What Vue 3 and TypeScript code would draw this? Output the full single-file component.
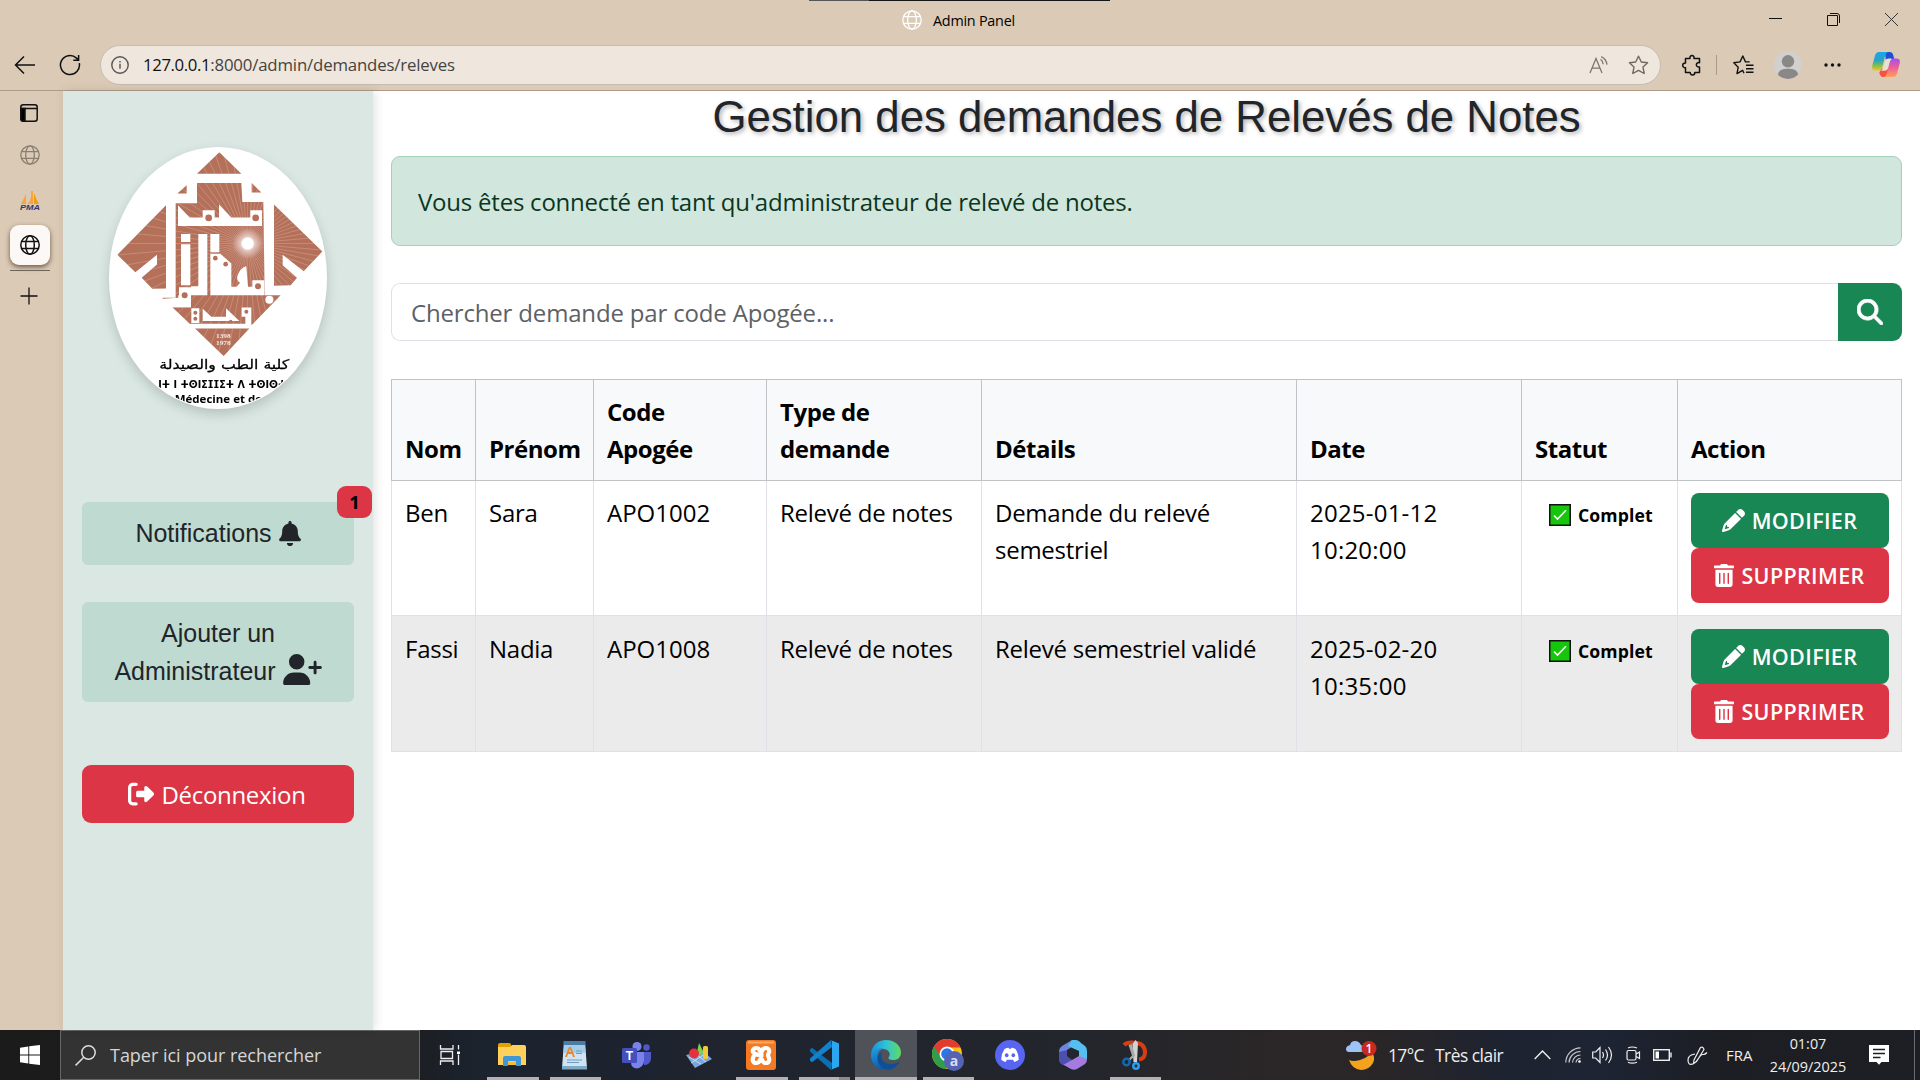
<script setup lang="ts">
interface Demande {
  nom: string
  prenom: string
  code: string
  type: string
  details: string
  date: string
  heure: string
}

const demandes: Demande[] = [
  { nom: 'Ben', prenom: 'Sara', code: 'APO1002', type: 'Relevé de notes', details: 'Demande du relevé semestriel', date: '2025-01-12', heure: '10:20:00' },
  { nom: 'Fassi', prenom: 'Nadia', code: 'APO1008', type: 'Relevé de notes', details: 'Relevé semestriel validé', date: '2025-02-20', heure: '10:35:00' },
]

const colonnes = ['Nom', 'Prénom', 'Code Apogée', 'Type de demande', 'Détails', 'Date', 'Statut', 'Action']

// Sun rays of the emblem, spread from the centre of the sun
const rays = Array.from({ length: 72 }, (_, i) => {
  const a = (i * 5 * Math.PI) / 180
  return { x: 473 + Math.cos(a) * 420, y: 340 + Math.sin(a) * 420 }
})
</script>

<template>
  <div class="screen">
    <header class="browser">
      <div class="titlebar">
        <i class="snapbar"></i>
        <div class="tabtitle">
          <svg width="20" height="20" viewBox="0 0 20 20" fill="none" stroke="#fff" stroke-width="1.3"><circle cx="10" cy="10" r="9.2" /><ellipse cx="10" cy="10" rx="4.3" ry="9.2" /><path d="M1.6 6.6h16.8M1.6 13.4h16.8" /></svg>
          <span>Admin Panel</span>
        </div>
        <svg class="wincontrols" width="160" height="40" viewBox="0 0 160 40" fill="none" stroke="#111" stroke-width="1"><path d="M29 18.5h13" /><path d="M87.5 15.5h10v10h-10zM90 13.5h7q2.5 0 2.5 2.5v7" /><path d="M145 13l13 13M158 13l-13 13" stroke="#333" /></svg>
      </div>
      <div class="toolbar">
        <svg class="back" width="22" height="20" viewBox="0 0 22 20" fill="none" stroke="#111" stroke-width="1.5"><path d="M10 1.5L1.5 10L10 18.5M1.5 10H21" /></svg>
        <svg class="reload" width="22" height="22" viewBox="0 0 22 22" fill="none" stroke="#111" stroke-width="1.5"><path d="M20.3 9.2A9.5 9.5 0 1 1 17.5 4.1L19.6 6M19.6 1v5.2h-5.3" /></svg>
        <div class="url">
          <svg width="18" height="18" viewBox="0 0 18 18" fill="none" stroke="#555" stroke-width="1.4"><circle cx="9" cy="9" r="8.2" /><path d="M9 7.8v5" /><path d="M9 5v1.5" /></svg>
          <span class="address"><b>127.0.0.1</b>:8000/admin/demandes/releves</span>
          <svg class="read" width="20" height="18" viewBox="0 0 20 18" fill="none" stroke="#7d776f" stroke-width="1.3"><path d="M1 17L7 2.5L13 17M3 12.2h8M11.5 3.2q2.5 1.8 2.7 5M12.2.7q5 2.2 5.8 8" /></svg>
          <svg width="21" height="20" viewBox="0 0 21 20" fill="none" stroke="#6f6961" stroke-width="1.4" stroke-linejoin="round"><path d="M10.5 1.2l2.8 5.8 6.3.8-4.6 4.3 1.2 6.4-5.7-3.1-5.7 3.1L6 12.1 1.4 7.8l6.3-.8z" /></svg>
        </div>
        <svg class="ext" width="20" height="22" viewBox="0 0 20 22" fill="none" stroke="#111" stroke-width="1.5" stroke-linejoin="round"><path d="M3.5 4.5H8c-.8-4 4.8-4 4 0h5.5v4.2c-4.200-.8-4.200 5 0 4.3V18.500H12.800c0 3.300-4.600 3.300-4.600 0H3.500v-4.800C-.2 13.800-.2 8.800 3.500 8.900z" /></svg>
        <i class="sep"></i>
        <svg class="favs" width="21" height="20" viewBox="0 0 21 20" fill="none" stroke="#111" stroke-width="1.4" stroke-linejoin="round"><path d="M11 18.2L9.600 15.300 4 18.600 5.200 12.200.8 7.800l6.200-.9L9.800 1l2.700 5.900h4.200M13 10.200h7.500M13 13.700h7.500M13 17.200h7.500" /></svg>
        <svg class="avatar" width="28" height="28" viewBox="0 0 28 28"><circle cx="14" cy="14" r="14" fill="#d2d0ce" /><circle cx="14" cy="10.3" r="6.2" fill="#8a8886" /><path d="M3.800 23.500C5 18.500 9 17.700 14 17.700s9 .8 10.200 5.800A14 14 0 0 1 3.800 23.500z" fill="#8a8886" /></svg>
        <svg class="dots" width="17" height="4" viewBox="0 0 17 4" fill="#111"><circle cx="2" cy="2" r="1.7" /><circle cx="8.5" cy="2" r="1.7" /><circle cx="15" cy="2" r="1.7" /></svg>
        <svg class="copilot" width="28" height="27" viewBox="0 0 28 27">
          <defs>
            <linearGradient id="cpa" x1="0" y1="0" x2="0" y2="1"><stop offset="0" stop-color="#1aa6ee" /><stop offset=".45" stop-color="#2aa4c4" /><stop offset=".7" stop-color="#72bd55" /><stop offset="1" stop-color="#f2c61a" /></linearGradient>
            <linearGradient id="cpb" x1="0" y1="0" x2="0" y2="1"><stop offset="0" stop-color="#a74fe8" /><stop offset=".5" stop-color="#ef5f97" /><stop offset="1" stop-color="#ffa05a" /></linearGradient>
          </defs>
          <path d="M13 1h4.500q3 0 3.700 3l1 4h-5q-2.500 0-3.300 2z" fill="#1d4fd0" />
          <path d="M10 26h5.500q2.500 0 3.300-3l2-8-6 3-5-.5-2.500 4q0 3 2.700 4.500z" fill="#f1553f" />
          <path d="M7 1h9q-2 .5-3 4L10.500 15q-1 4.500-4 4.500H3.500Q-.8 19.500.3 14.500L3 4.500Q4 1 7 1z" fill="url(#cpa)" />
          <path d="M21 26h-9q2-.5 3-4l2.500-10q1-4.500 4-4.500h3q4.300 0 3.200 5L25 22.500q-1 3.500-4 3.500z" fill="url(#cpb)" />
          <path d="M13.200 9.500q.8-2 3.300-2h3.200q-1.800 1.400-2.400 4l-1.700 6.500q-.6 1.700-3 1.700H9.200q1.500-1 2.300-4z" fill="#e9dfd2" />
        </svg>
      </div>
    </header>

    <div class="body">
      <nav class="rail">
        <svg class="r1" width="18" height="18" viewBox="0 0 18 18" fill="none" stroke="#111" stroke-width="1.5"><rect x=".8" y=".8" width="16.4" height="16.4" rx="2.5" /><path d="M1 4.500h16" /><path d="M1 4.500h4v12.500H2.500L1 15.500z" fill="#000" /></svg>
        <svg class="r2" width="20" height="20" viewBox="0 0 20 20" fill="none" stroke="#8a7f72" stroke-width="1.3"><circle cx="10" cy="10" r="9.2" /><ellipse cx="10" cy="10" rx="4.3" ry="9.2" /><path d="M1.600 6.600h16.800M1.600 13.400h16.800" /></svg>
        <svg class="r3" width="20" height="20" viewBox="0 0 20 20"><path d="M6 3v10H1zM13 0v13H7.500Q12 9 11 0z" fill="#f7a540" /><path d="M14 2q2 6 5 11h-5z" fill="#f89c0e" /><text x="0" y="19" class="pma" textLength="20" lengthAdjust="spacingAndGlyphs">PMA</text></svg>
        <div class="active"><svg width="20" height="20" viewBox="0 0 20 20" fill="none" stroke="#111" stroke-width="1.5"><circle cx="10" cy="10" r="9.2" /><ellipse cx="10" cy="10" rx="4.3" ry="9.2" /><path d="M1.600 6.600h16.800M1.600 13.400h16.800" /></svg></div>
        <i class="railline"></i>
        <svg class="r5" width="18" height="18" viewBox="0 0 18 18" stroke="#111" stroke-width="1.3"><path d="M9 .5v17M.5 9h17" /></svg>
      </nav>

      <aside class="sidebar">
        <svg class="logo" width="218" height="262" viewBox="57 50 654 787" preserveAspectRatio="none">
          <defs>
            <clipPath id="oval"><ellipse cx="384" cy="443.5" rx="324" ry="390" /></clipPath>
            <clipPath id="brown"><path d="M388 66L454 130H321zM290 165V190H262zM485 158L514 187H485zM321 158H454L457 215H520L524 495H572L484 586V582H300L247 531H302V495H265V503L218 506V503H257V219H321zM228 225V475L187 476 155 443 201 403V374L136 426 82 374zM552 223L697 364 641 423 578 374V405L621 443 602 465 552 467zM315 595H478L401 678z" /></clipPath>
            <radialGradient id="sun"><stop offset="0" stop-color="#fff" /><stop offset=".36" stop-color="#fff" /><stop offset=".45" stop-color="#fff" stop-opacity=".5" /><stop offset="1" stop-color="#fff" stop-opacity="0" /></radialGradient>
          </defs>
          <ellipse cx="384" cy="443.5" rx="327" ry="393.5" fill="#fff" />
          <g clip-path="url(#oval)">
            <g clip-path="url(#brown)">
              <rect x="60" y="50" width="650" height="640" fill="#b5705a" />
              <path v-for="(r, i) in rays" :key="i" :d="`M473 340L${r.x} ${r.y}`" stroke="#e6c9bd" stroke-width="1.5" opacity=".65" />
              <circle cx="473" cy="340" r="46" fill="url(#sun)" />
            </g>
            <g fill="#fff">
              <path d="M264 225L299 262H338V240H374V262H387V223L424 262H481V240H516V287H264z" />
              <path d="M273 311h28v24h-28zM273 342h28v123h-28zM325 311h27v184h-27zM361 311h27v55h-27zM361 402h30v93h-30zM361 371H391L424 400V470H440L450 458Q436 450 444 432 452 412 469 408L474 470H487V450H523V495H391V402H361zM267 471H303V468H352V495H303V531H240L218 508H267z" />
              <circle cx="538" cy="509" r="12" />
              <path d="M304 534h24v45h-24zM338 536L364 560H408V534L448 573H466V560H455V532H484V594H302V581H466V573H338z" />
            </g>
            <g fill="#b5705a"><circle cx="356" cy="263" r="10" /><circle cx="497" cy="263" r="10" /><circle cx="376" cy="384" r="7" /><circle cx="407" cy="402" r="7" /><circle cx="504" cy="468" r="9" /><circle cx="284" cy="495" r="9" /><circle cx="316" cy="548" r="6" /><circle cx="316" cy="566" r="6" /><circle cx="469" cy="545" r="6" /><circle cx="422" cy="574" r="5" /></g>
            <text x="378" y="624" class="year" textLength="44" lengthAdjust="spacingAndGlyphs">1398</text>
            <text x="378" y="645" class="year" textLength="44" lengthAdjust="spacingAndGlyphs">1978</text>
            <text x="403" y="718" class="arab" text-anchor="middle" textLength="390" lengthAdjust="spacingAndGlyphs">كلية الطب والصيدلة</text>
            <text x="205" y="773" class="tifi" textLength="384" lengthAdjust="spacingAndGlyphs">ⵏⵜ ⵏ ⵜⵙⵏⵉⵊⵊⵉⵜ ⴷ ⵜⵙⵏⵙⵜ</text>
            <text x="254" y="818" class="fac" textLength="262" lengthAdjust="spacingAndGlyphs">Médecine et de</text>
          </g>
        </svg>
        <a class="link notif"><span>Notifications</span>
          <svg width="22" height="25" viewBox="0 0 448 512" fill="#212529"><path d="M224 512c35.320 0 63.970-28.650 63.970-64H160.030c0 35.350 28.650 64 63.970 64zm215.390-149.710c-19.320-20.760-55.470-51.990-55.470-154.290 0-77.700-54.480-139.900-127.940-155.160V32c0-17.670-14.320-32-31.980-32s-31.980 14.330-31.980 32v20.840C118.560 68.100 64.080 130.300 64.080 208c0 102.300-36.150 133.530-55.470 154.290-6 6.450-8.660 14.160-8.610 21.710.11 16.400 12.980 32 32.100 32h383.800c19.120 0 32-15.600 32.100-32 .05-7.550-2.610-15.270-8.610-21.710z" /></svg>
          <span class="count">1</span>
        </a>
        <a class="link admin"><span>Ajouter un</span><span class="second"><span>Administrateur</span>
          <svg width="39" height="31" viewBox="0 0 640 512" fill="#212529"><path d="M96 128a128 128 0 1 1 256 0A128 128 0 1 1 96 128zM0 482.300C0 383.800 79.800 304 178.300 304h91.400C368.200 304 448 383.800 448 482.300c0 16.400-13.300 29.700-29.700 29.700H29.700C13.300 512 0 498.700 0 482.300zM504 312V248H440c-13.300 0-24-10.700-24-24s10.700-24 24-24h64V136c0-13.300 10.700-24 24-24s24 10.700 24 24v64h64c13.300 0 24 10.700 24 24s-10.700 24-24 24H552v64c0 13.300-10.700 24-24 24s-24-10.700-24-24z" /></svg></span>
        </a>
        <button class="logout">
          <svg width="26" height="26" viewBox="0 0 512 512" fill="#fff"><path d="M377.900 105.900L500.700 228.700c7.200 7.200 11.300 17.100 11.300 27.300s-4.100 20.100-11.300 27.300L377.900 406.100c-6.400 6.400-15 9.900-24 9.900c-18.700 0-33.900-15.200-33.900-33.900l0-62.100-128 0c-17.700 0-32-14.300-32-32l0-64c0-17.700 14.300-32 32-32l128 0 0-62.100c0-18.700 15.200-33.900 33.900-33.900c9 0 17.600 3.600 24 9.900zM160 96L96 96c-17.700 0-32 14.300-32 32l0 256c0 17.700 14.300 32 32 32l64 0c17.700 0 32 14.300 32 32s-14.300 32-32 32l-64 0c-53 0-96-43-96-96L0 128C0 75 43 32 96 32l64 0c17.700 0 32 14.300 32 32s-14.300 32-32 32z" /></svg>
          <span>Déconnexion</span>
        </button>
      </aside>

      <main class="main">
        <h1>Gestion des demandes de Relevés de Notes</h1>
        <div class="alert"><span>Vous êtes connecté en tant qu'administrateur de relevé de notes.</span></div>
        <div class="search">
          <div class="input"><span>Chercher demande par code Apogée...</span></div>
          <button><svg width="26" height="26" viewBox="0 0 512 512" fill="#fff" stroke="#fff" stroke-width="14"><path d="M416 208c0 45.900-14.900 88.300-40 122.700L502.600 457.400c12.500 12.500 12.500 32.800 0 45.300s-32.800 12.500-45.300 0L330.700 376c-34.400 25.200-76.800 40-122.700 40C93.100 416 0 322.900 0 208S93.100 0 208 0S416 93.100 416 208zM208 352a144 144 0 1 0 0-288 144 144 0 1 0 0 288z" /></svg></button>
        </div>
        <table>
          <colgroup><col class="c1" /><col class="c2" /><col class="c3" /><col class="c4" /><col class="c5" /><col class="c6" /><col class="c7" /><col class="c8" /></colgroup>
          <thead><tr><th v-for="c in colonnes" :key="c">{{ c }}</th></tr></thead>
          <tbody>
            <tr v-for="d in demandes" :key="d.code">
              <td>{{ d.nom }}</td>
              <td>{{ d.prenom }}</td>
              <td class="code">{{ d.code }}</td>
              <td>{{ d.type }}</td>
              <td class="details">{{ d.details }}</td>
              <td class="date">{{ d.date }}<br />{{ d.heure }}</td>
              <td><div class="statut"><svg width="22" height="22" viewBox="0 0 22 22"><rect x=".75" y=".75" width="20.5" height="20.5" fill="#16c60c" stroke="#111" stroke-width="1.5" /><path d="M5 11.500l3.500 3.500L17 6.300" fill="none" stroke="#fff" stroke-width="1.6" /></svg><span>Complet</span></div></td>
              <td class="actions">
                <button class="edit"><svg width="23" height="23" viewBox="0 0 512 512" fill="#fff"><path d="M410.300 231l11.300-11.300-33.900-33.900-62.100-62.100L291.700 89.800l-11.300 11.300-22.600 22.600L58.600 322.900c-10.400 10.400-18 23.300-22.200 37.400L1 480.700c-2.500 8.400-.2 17.500 6.100 23.700s15.300 8.500 23.700 6.100l120.300-35.400c14.100-4.200 27-11.800 37.400-22.200L387.700 253.700 410.300 231zM160 399.400l-9.100 22.700c-4 3.100-8.500 5.400-13.300 6.900L59.400 452l23-78.100c1.400-4.900 3.800-9.400 6.900-13.300l22.700-9.100v32c0 8.800 7.200 16 16 16h32zM362.700 18.700L348.300 33.200 325.700 55.800 314.300 67.100l33.900 33.900 62.100 62.100 33.900 33.900 11.300-11.300 22.600-22.600 14.500-14.500c25-25 25-65.500 0-90.500L453.300 18.700c-25-25-65.500-25-90.500 0z" /></svg><span>MODIFIER</span></button>
                <button class="del"><svg width="20" height="23" viewBox="0 0 448 512" fill="#fff"><path d="M32 464a48 48 0 0 0 48 48h288a48 48 0 0 0 48-48V128H32zm272-256a16 16 0 0 1 32 0v224a16 16 0 0 1-32 0zm-96 0a16 16 0 0 1 32 0v224a16 16 0 0 1-32 0zm-96 0a16 16 0 0 1 32 0v224a16 16 0 0 1-32 0zM432 32H312l-9.400-18.700A24 24 0 0 0 281.100 0H166.800a23.720 23.720 0 0 0-21.400 13.300L136 32H16A16 16 0 0 0 0 48v32a16 16 0 0 0 16 16h416a16 16 0 0 0 16-16V48a16 16 0 0 0-16-16z" /></svg><span>SUPPRIMER</span></button>
              </td>
            </tr>
          </tbody>
        </table>
      </main>
    </div>

    <footer class="taskbar">
      <div class="start"><svg width="20" height="20" viewBox="0 0 20 20" fill="#fff"><path d="M0 2.800L8.300 1.500V9.500H0zM9.200 1.300L20 0V9.500H9.200zM0 10.400H8.300V18.500L0 17.200zM9.200 10.400H20V20L9.200 18.700z" /></svg></div>
      <div class="find">
        <svg width="21" height="21" viewBox="0 0 21 21" fill="none" stroke="#ddd" stroke-width="1.5"><circle cx="13.5" cy="7.5" r="6.7" /><path d="M8.800 12.200L.6 20.400" /></svg>
        <span>Taper ici pour rechercher</span>
      </div>
      <div class="apps">
        <div class="app"><svg width="22" height="22" viewBox="0 0 22 22" fill="none" stroke="#eee" stroke-width="1.3"><path d="M1.500 1v4h12.500V1M1.500 21v-4h12.500v4M2 7.500h11.500v7H2zM19.500 1v4.500M19.500 10.500V21" /><path d="M18 7.500h3v2.500h-3z" fill="#fff" stroke="none" /></svg></div>
        <div class="app"><svg width="28" height="24" viewBox="0 0 28 24"><path d="M0 2q0-2 2-2h9q2 0 2 2v3H0z" fill="#e2a100" /><path d="M0 4h12l2-2h12q2 0 2 2v18H0z" fill="#ffd15c" /><path d="M5 23v-8q0-2 2-2h14q2 0 2 2v8h-5v-4q0-1-1-1h-6q-1 0-1 1v4z" fill="#3f97d8" /><path d="M10 22v-3h8v3z" fill="#f7bb35" /></svg><i></i></div>
        <div class="app"><svg width="25" height="29" viewBox="0 0 25 29"><path d="M2 1h21l2 26H0z" fill="#cfe4f2" /><path d="M1.500 0h22v4h-22z" fill="#487da5" /><path d="M2 4h21l.5 8H1.500z" fill="#a5cdea" /><path d="M0 25h25v3.500H0z" fill="#7fa9c6" /><path d="M3 16L7 6h2l4 10h-2l-1-3H6l-1 3zM6.700 11h2.600L8 7.800z" fill="#f28227" /><path d="M14 10h6M14 12.500h6M5 19h15M5 21.500h12" stroke="#6d9cc0" stroke-width="1" /></svg><i></i></div>
        <div class="app"><svg width="29" height="27" viewBox="0 0 29 27"><circle cx="15" cy="4.5" r="4.5" fill="#7b83eb" /><circle cx="24.5" cy="5.5" r="3.2" fill="#5059c9" /><path d="M20 10h9v7q-1 6-7 6z" fill="#5059c9" /><path d="M9 10h13v9q-1 7-7 7.500-6-.5-6-6z" fill="#7b83eb" /><rect y="6" width="15" height="15" rx="1.5" fill="#4450bd" /><text x="7.5" y="17.5" class="tee" text-anchor="middle">T</text></svg></div>
        <div class="app"><svg width="28" height="25" viewBox="0 0 28 25"><path d="M1 12l17-4 9 8-17 9z" fill="#79a7dd" /><path d="M4 14l12 7M11 11l10 8M6 20l14-9" stroke="#dbe9fa" stroke-width=".8" /><path d="M14 0l5 10-4 2-3-3z" fill="#7ed348" /><circle cx="9" cy="10.5" r="5" fill="#e6303c" /><rect x="18" y="3" width="5" height="13" rx="1.5" fill="#f5c83b" /></svg></div>
        <div class="app"><svg width="30" height="30" viewBox="0 0 30 30"><rect width="30" height="30" rx="3" fill="#f37a22" /><path d="M2 1.500h26v2H2z" fill="#f9a869" /><g fill="none" stroke="#fff" stroke-width="4.2" stroke-linejoin="round"><path d="M12.800 15C9 14.500 6 12.500 7 10c1.500-3 6-2.500 6.500.5l1.500 1.500 1.500-1.500C17 7.500 21.500 7 23 10c1 2.500-1 3.500-1 5s2 3.500 1 6c-1.500 3-6 2.500-6.500-.5L15 18.500l-1.500 2C13 23.500 8.500 24 7 21c-1-2.500 1-4.500 1-6M12.500 15h5" /></g></svg><i></i></div>
        <div class="app vs"><svg width="30" height="30" viewBox="0 0 30 30"><path d="M1 9.500l2-1.700L23 23l-1 7L1 11.500z" fill="#0b6fb5" /><path d="M1 20.500l2 1.700L23 7l-1-7L1 18.500z" fill="#1481cc" /><path d="M21.500 0L30 3.500v23L21.500 30q1.500-.5 1.500-2V2q0-1.500-1.500-2z" fill="#2ba6f0" /></svg><i></i></div>
        <div class="app current"><svg width="30" height="30" viewBox="0 0 30 30"><defs><linearGradient id="eda" x1="0" y1=".5" x2="1" y2=".5"><stop offset="0" stop-color="#1d8fd8" /><stop offset=".5" stop-color="#30c3d8" /><stop offset="1" stop-color="#5edc5e" /></linearGradient><linearGradient id="edb" x1="0" y1="0" x2=".3" y2="1"><stop offset="0" stop-color="#1ea0e5" /><stop offset="1" stop-color="#0b5cb0" /></linearGradient></defs><path d="M0 14C1 5 7 0 15 0c9 0 15 6 15 12.500 0 5-3.500 7.500-7.500 7.500-4 0-5.500-1.500-5-2.500 3-3 .5-8.500-5-8.500C7 9 2 11 0 14z" fill="url(#eda)" /><path d="M0 14.500C2 8.500 8 7.500 12.500 8.500c-5 1.500-6.500 6-6 10C7 24 11 28.500 17 29.800 7 31-.5 24 0 14.500z" fill="url(#edb)" /><path d="M10.500 14C9 19 13 24 20 24c3 0 5.500-.8 7.500-2 .6-.4 1 .2.600.7C25.500 27 21 30 17 29.800 10 29 5 22 7 16c.8-2 2.500-3.500 5.500-5-1.500 1-2 2-2 3z" fill="#104f95" /></svg><i></i></div>
        <div class="app"><svg class="chrome" width="33" height="33" viewBox="0 0 33 33"><circle cx="15" cy="15" r="15" fill="#fbc116" /><path d="M15 15L2 7.500A15 15 0 0 0 14 30l6-9z" fill="#2f9e4b" /><path d="M2 7.500A15 15 0 0 1 28.500 8.500H15L9 18z" fill="#e33b2e" /><circle cx="15" cy="15" r="7.5" fill="#fff" /><circle cx="15" cy="15" r="5.8" fill="#2b77e8" /><circle cx="22" cy="22" r="10" fill="#5563b4" /><text x="22" y="26.5" class="prof" text-anchor="middle">a</text></svg><i></i></div>
        <div class="app"><svg width="30" height="30" viewBox="0 0 30 30"><circle cx="15" cy="15" r="15" fill="#5865f2" /><path d="M9.500 9q2.500-1.300 4-1.300l.5 1h2l.5-1q1.500 0 4 1.300 3.500 5.200 3.200 10.700-2.200 1.700-4.400 2.200l-1.200-2.100h-6.200L10.700 21.900q-2.200-.5-4.400-2.200Q6 14.200 9.500 9z" fill="#fff" /><ellipse cx="11.7" cy="15.3" rx="1.8" ry="2" fill="#5865f2" /><ellipse cx="18.3" cy="15.3" rx="1.8" ry="2" fill="#5865f2" /></svg></div>
        <div class="app"><svg width="28" height="30" viewBox="0 0 28 30"><path d="M13 0L3 6Q0 8 0 11v9l8-5V10l9-6V1q-2-2-4-1z" fill="#6c86e0" /><path d="M13 0q6-1 9 3l4 3q2 1.500 2 5v9l-8-3V11L9 6z" fill="#55bff0" /><path d="M0 18q0 4 3 6l9 5q3 1.500 6 0l8-5q2-1.500 2-5l-8-3-7 4z" fill="#a57be0" /><path d="M0 12v8q1 4 4 5l9-5-5-4v-6z" fill="#4c4fae" /></svg></div>
        <div class="app"><svg width="26" height="30" viewBox="0 0 26 30"><path d="M2 5q3-3 9-2.500 12 0 12 10 0 6-6 7" fill="none" stroke="#d63e12" stroke-width="4" /><path d="M13.500 0l2.500 3-1 19h-3.500l-1-18z" fill="#d2d2d2" /><path d="M6.500 5L10 4l3 12-5 4.500-1-2 3-3z" fill="#a9a9a9" /><circle cx="4.500" cy="22" r="3.2" fill="none" stroke="#1566b0" stroke-width="2.500" /><circle cx="14" cy="26" r="2.700" fill="none" stroke="#2a9df0" stroke-width="2.500" /></svg><i></i></div>
      </div>
      <div class="tray">
        <svg class="weather" width="31" height="29" viewBox="0 0 31 29"><path d="M3 19q4 2 11 0 10-3 11-9 5 6 2 12-4 7-12 7-9-1-12-10z" fill="#f5a21f" /><path d="M3 11q-3 0-3-3t4-4q1-4 5-4t6 4q3 1 3 4t-3 3z" fill="#9dc2f5" /><circle cx="23" cy="7.5" r="7.5" fill="#c92a20" /><text x="23" y="12" class="wn" text-anchor="middle">1</text></svg>
        <span class="temp">17°C</span><span class="sky">Très clair</span>
        <svg class="chev" width="17" height="10" viewBox="0 0 17 10" fill="none" stroke="#eee" stroke-width="1.4"><path d="M.7 9L8.500 1l7.800 8" /></svg>
        <svg class="wifi" width="16" height="16" viewBox="0 0 16 16" fill="none" stroke="#ccc" stroke-width="1.2"><path d="M.8 15.500A15 15 0 0 1 15.500.8M4 15.500A11.500 11.500 0 0 1 15.500 4.500M7.500 15.500a8 8 0 0 1 8-7.500M11 15.500q.5-4 4.500-4" /><circle cx="14.5" cy="14.5" r="1.3" fill="#fff" stroke="none" /></svg>
        <svg class="vol" width="21" height="18" viewBox="0 0 21 18" fill="none" stroke="#eee" stroke-width="1.2"><path d="M.7 6h3L8 1.500v15L3.700 12h-3zM10.500 6q2 3 0 6M13.500 3.500q4 5.500 0 11M16.500 1q6 8 0 16" /></svg>
        <svg class="cam" width="15" height="18" viewBox="0 0 15 18" fill="none" stroke="#eee" stroke-width="1.2"><rect x="1" y="4.5" width="9" height="9.5" rx="1.5" /><path d="M10 8l3.500-2v6.500L10 10.500M2 2Q6 0 11 2M2 16.200q4 2 9 0" /></svg>
        <svg class="bat" width="19" height="12" viewBox="0 0 19 12" fill="none" stroke="#eee" stroke-width="1.4"><rect x=".7" y=".7" width="15.6" height="10.6" /><path d="M18 3.500v5" /><path d="M2.500 2.500h3.500v7H2.500z" fill="#fff" stroke="none" /></svg>
        <svg class="pen" width="21" height="20" viewBox="0 0 21 20" fill="none" stroke="#eee" stroke-width="1.2"><path d="M7 15L6.500 18.500 9.500 16.500 17 4.500Q16 1 13.500 2.500zM8 9Q1 10 1 15t4 4.200q3-.5 6-5.200t5-4.500 4-2" /></svg>
        <span class="lang">FRA</span>
        <div class="clock"><span class="hour">01:07</span><span class="day">24/09/2025</span></div>
        <svg class="note" width="20" height="20" viewBox="0 0 20 20"><path d="M0 0h20v17h-7.500L10 19.800 7.500 17H0z" fill="#fff" /><path d="M4 4.500h12M4 8.500h12M4 12.500h7.500" stroke="#1d1f24" stroke-width="1.3" /></svg>
        <i class="desk"></i>
      </div>
    </footer>
  </div>
</template>

<style>
body { margin: 0; overflow: hidden; }
</style>

<style scoped>
* { box-sizing: border-box; }
.screen { width: 1920px; height: 1080px; display: flex; flex-direction: column; overflow: hidden; background: #fff; font-family: "Open Sans", "Noto Sans", sans-serif; color: #000; }
svg { display: block; flex: none; }
span { white-space: nowrap; }
.browser { height: 91px; background: #dbcab6; border-bottom: 1px solid #ad9b8a; flex: none; }
.titlebar { height: 45px; position: relative; display: flex; justify-content: flex-end; }
.wincontrols { margin-right: 20px; }
.snapbar { position: absolute; left: 809px; top: 0; width: 301px; height: 1px; background: linear-gradient(90deg, #555 60px, #151515 60px); }
.tabtitle { position: absolute; left: 902px; top: 10px; height: 20px; display: flex; align-items: center; gap: 11px; font-size: 14.4px; letter-spacing: -.25px; }
.toolbar { height: 39px; display: flex; align-items: center; }
.back { margin-left: 14px; }
.reload { margin-left: 23px; }
.url { margin-left: 19px; width: 1561px; height: 40px; border: 1px solid #c5bdb3; border-radius: 20px; background: #efe7de; display: flex; align-items: center; padding: 0 11px 0 10px; }
.address { margin-left: 14px; font-size: 16.8px; color: #454340; flex: 1; letter-spacing: -.16px; }
.address b { font-weight: 400; color: #111; letter-spacing: -.4px; }
.read { margin-right: 19px; }
.ext { margin-left: 21px; }
.sep { width: 1px; height: 20px; background: #a79b8d; margin-left: 14px; }
.favs { margin-left: 16px; }
.avatar { margin-left: 20px; }
.dots { margin-left: 22px; }
.copilot { margin-left: 31px; }
.body { flex: 1; display: flex; min-height: 0; }
.rail { width: 63px; background: #dbcab6; flex: none; }
.r1 { margin: 13px 0 0 20px; }
.r2 { margin: 23px 0 0 20px; }
.r3 { margin: 26px 0 0 20px; overflow: visible; }
.pma { font: italic 700 7.5px "Liberation Sans", sans-serif; fill: #34346f; }
.active { width: 40px; height: 40px; margin: 14px 0 0 10px; border-radius: 9px; background: #fcf8f5; box-shadow: 0 2px 5px rgba(60, 40, 20, .7); display: flex; align-items: center; justify-content: center; }
.railline { display: block; width: 40px; height: 1px; background: #6f655b; margin: 5px 0 0 10px; }
.r5 { margin: 16px 0 0 20px; }
.sidebar { width: 310px; flex: none; background: #dae7e2; box-shadow: 2px 0 10px rgba(0, 0, 0, .12); padding: 56px 19px 0; display: flex; flex-direction: column; z-index: 1; font: 25px/37.5px "Liberation Sans", Arial, sans-serif; color: #212529; }
.logo { margin: 0 auto; filter: drop-shadow(0 5px 6px rgba(0, 0, 0, .16)); }
.year { font: 700 19px "Liberation Serif", serif; fill: #f5e8e2; }
.arab { font: 400 40px "DejaVu Sans", sans-serif; fill: #000; stroke: #000; stroke-width: .8px; }
.tifi { font: 700 32px "DejaVu Sans", sans-serif; fill: #000; }
.fac { font: 700 33px "Open Sans", sans-serif; fill: #000; }
.link { background: #bfdad0; border-radius: 6px; display: flex; }
.notif { height: 63px; margin-top: 93px; position: relative; align-items: center; justify-content: center; gap: 7px; }
.count { position: absolute; right: -18px; top: -16px; width: 35px; height: 32px; border-radius: 9px; background: #dc3545; color: #000; font: 700 18.5px/32px "Open Sans", sans-serif; text-align: center; }
.admin { height: 100px; margin-top: 37px; flex-direction: column; align-items: center; padding-top: 13px; }
.second { display: flex; gap: 7px; height: 37.5px; align-items: flex-start; }
.second svg { margin-top: 1px; }
.logout { height: 58px; margin-top: 63px; border: 0; border-radius: 9px; background: #dc3545; color: #fff; display: flex; align-items: center; justify-content: center; gap: 7px; font: 24px "Open Sans", sans-serif; letter-spacing: -.3px; padding: 0 2px 0 0; }
.main { flex: 1; min-width: 0; padding: 0 18px; }
h1 { margin: 0; height: 65px; font: 400 43.75px/52px "Liberation Sans", Arial, sans-serif; color: #212529; text-align: center; text-shadow: 2px 2px 4px rgba(0, 0, 0, .3); white-space: nowrap; }
.alert { height: 90px; border: 1px solid #a3cfbb; border-radius: 9px; background: #d1e7dd; color: #0a3622; display: flex; align-items: center; padding-left: 26px; font-size: 24px; letter-spacing: -.22px; }
.search { height: 58px; margin-top: 37px; display: flex; }
.input { flex: 1; border: 1px solid #dee2e6; border-right: 0; border-radius: 9px 0 0 9px; display: flex; align-items: center; padding-left: 19px; font-size: 24px; letter-spacing: -.17px; color: #5d6166; }
.search button { width: 64px; border: 0; background: #198754; border-radius: 0 9px 9px 0; display: flex; align-items: center; justify-content: center; padding: 0; }
table { margin-top: 38px; width: 1510px; table-layout: fixed; border-collapse: collapse; font-size: 24px; line-height: 37.5px; }
.c1 { width: 84px; } .c2 { width: 118px; } .c3 { width: 173px; } .c4 { width: 215px; } .c5 { width: 315px; } .c6 { width: 225px; } .c7 { width: 156px; } .c8 { width: 224px; }
th { text-align: left; vertical-align: bottom; background: #f8f9fa; border: 1px solid #c1c3c6; padding: 12.5px 0 12.5px 13px; font-weight: 700; letter-spacing: -.45px; height: 101px; }
th:nth-child(3) { padding-right: 20px; }
td { vertical-align: top; border: 1px solid #dee2e6; padding: 12.5px 0 0 13px; height: 136px; letter-spacing: -.26px; }
tbody tr:first-child td { border-top-color: #c1c3c6; height: 135px; }
tbody tr:nth-child(2) td { background: #ebebeb; padding-top: 13.5px; }
td.code { letter-spacing: 0; }
td.details { padding-right: 13px; }
td.date { letter-spacing: .22px; }
.statut { display: flex; align-items: center; gap: 7px; padding-left: 14px; font: 700 17.6px/42px "Open Sans", sans-serif; height: 42px; letter-spacing: .1px; }
tbody tr:first-child td.actions { padding-top: 12px; }
tbody tr:nth-child(2) td.actions { padding-top: 13px; }
.actions button { width: 198px; height: 55px; border: 0; border-radius: 8px; display: flex; align-items: center; justify-content: center; gap: 7px; padding: 0 1px 0 0; color: #fff; font: 600 21.5px "Open Sans", sans-serif; letter-spacing: .35px; }
.edit { background: #198754; }
.del { background: #dc3545; }
.taskbar { height: 50px; flex: none; display: flex; background: linear-gradient(90deg, #1b1b1c 0, #1c1d20 400px, #1b232e 480px, #20242e 800px, #24262c 1100px, #2b2627 1290px, #2a2627 1380px, #1d2330 1500px, #1d2433 1600px, #1c1e24 1720px, #1d1f24 1920px); color: #eee; }
.start { width: 60px; display: flex; align-items: center; justify-content: center; }
.find { width: 360px; border: 1px solid #666; background: #333; display: flex; align-items: center; gap: 14px; padding-left: 14px; font-size: 18px; letter-spacing: -.03px; color: #d6d6d6; }
.apps { display: flex; margin-left: -1px; width: 747px; }
.app { flex: 1; display: flex; align-items: center; justify-content: center; position: relative; }
.app i { position: absolute; left: 6px; right: 5px; bottom: 0; height: 3px; background: #b5b0b3; }
.vs i { background: linear-gradient(90deg, #b5b0b3 40px, #8b898c 40px); }
.current { background: #4f5258; }
.current i { left: 0; right: 0; }
.tee { font: 700 12px "Liberation Sans", sans-serif; fill: #fff; }
.prof { font: 700 14px "Open Sans", sans-serif; fill: #d9dcf2; }
.wn { font: 600 12px "Open Sans", sans-serif; fill: #fff; }
.tray { flex: 1; display: flex; align-items: center; font-size: 17.4px; padding-left: 180px; }
.temp { margin-left: 11px; width: 36px; letter-spacing: -.6px; }
.sky { margin-left: 11px; width: 68px; letter-spacing: -.5px; }
.chev { margin-left: 31px; }
.wifi { margin-left: 14px; }
.vol { margin-left: 11px; }
.cam { margin-left: 13px; }
.bat { margin-left: 12px; }
.pen { margin-left: 15px; }
.lang { margin-left: 18px; width: 26px; font-size: 15px; }
.clock { margin-left: 18px; width: 76px; display: flex; flex-direction: column; align-items: center; font-size: 14.4px; line-height: 23px; }
.note { margin-left: 23px; }
.desk { width: 1px; height: 50px; background: #686c74; margin-left: 25px; }
</style>
